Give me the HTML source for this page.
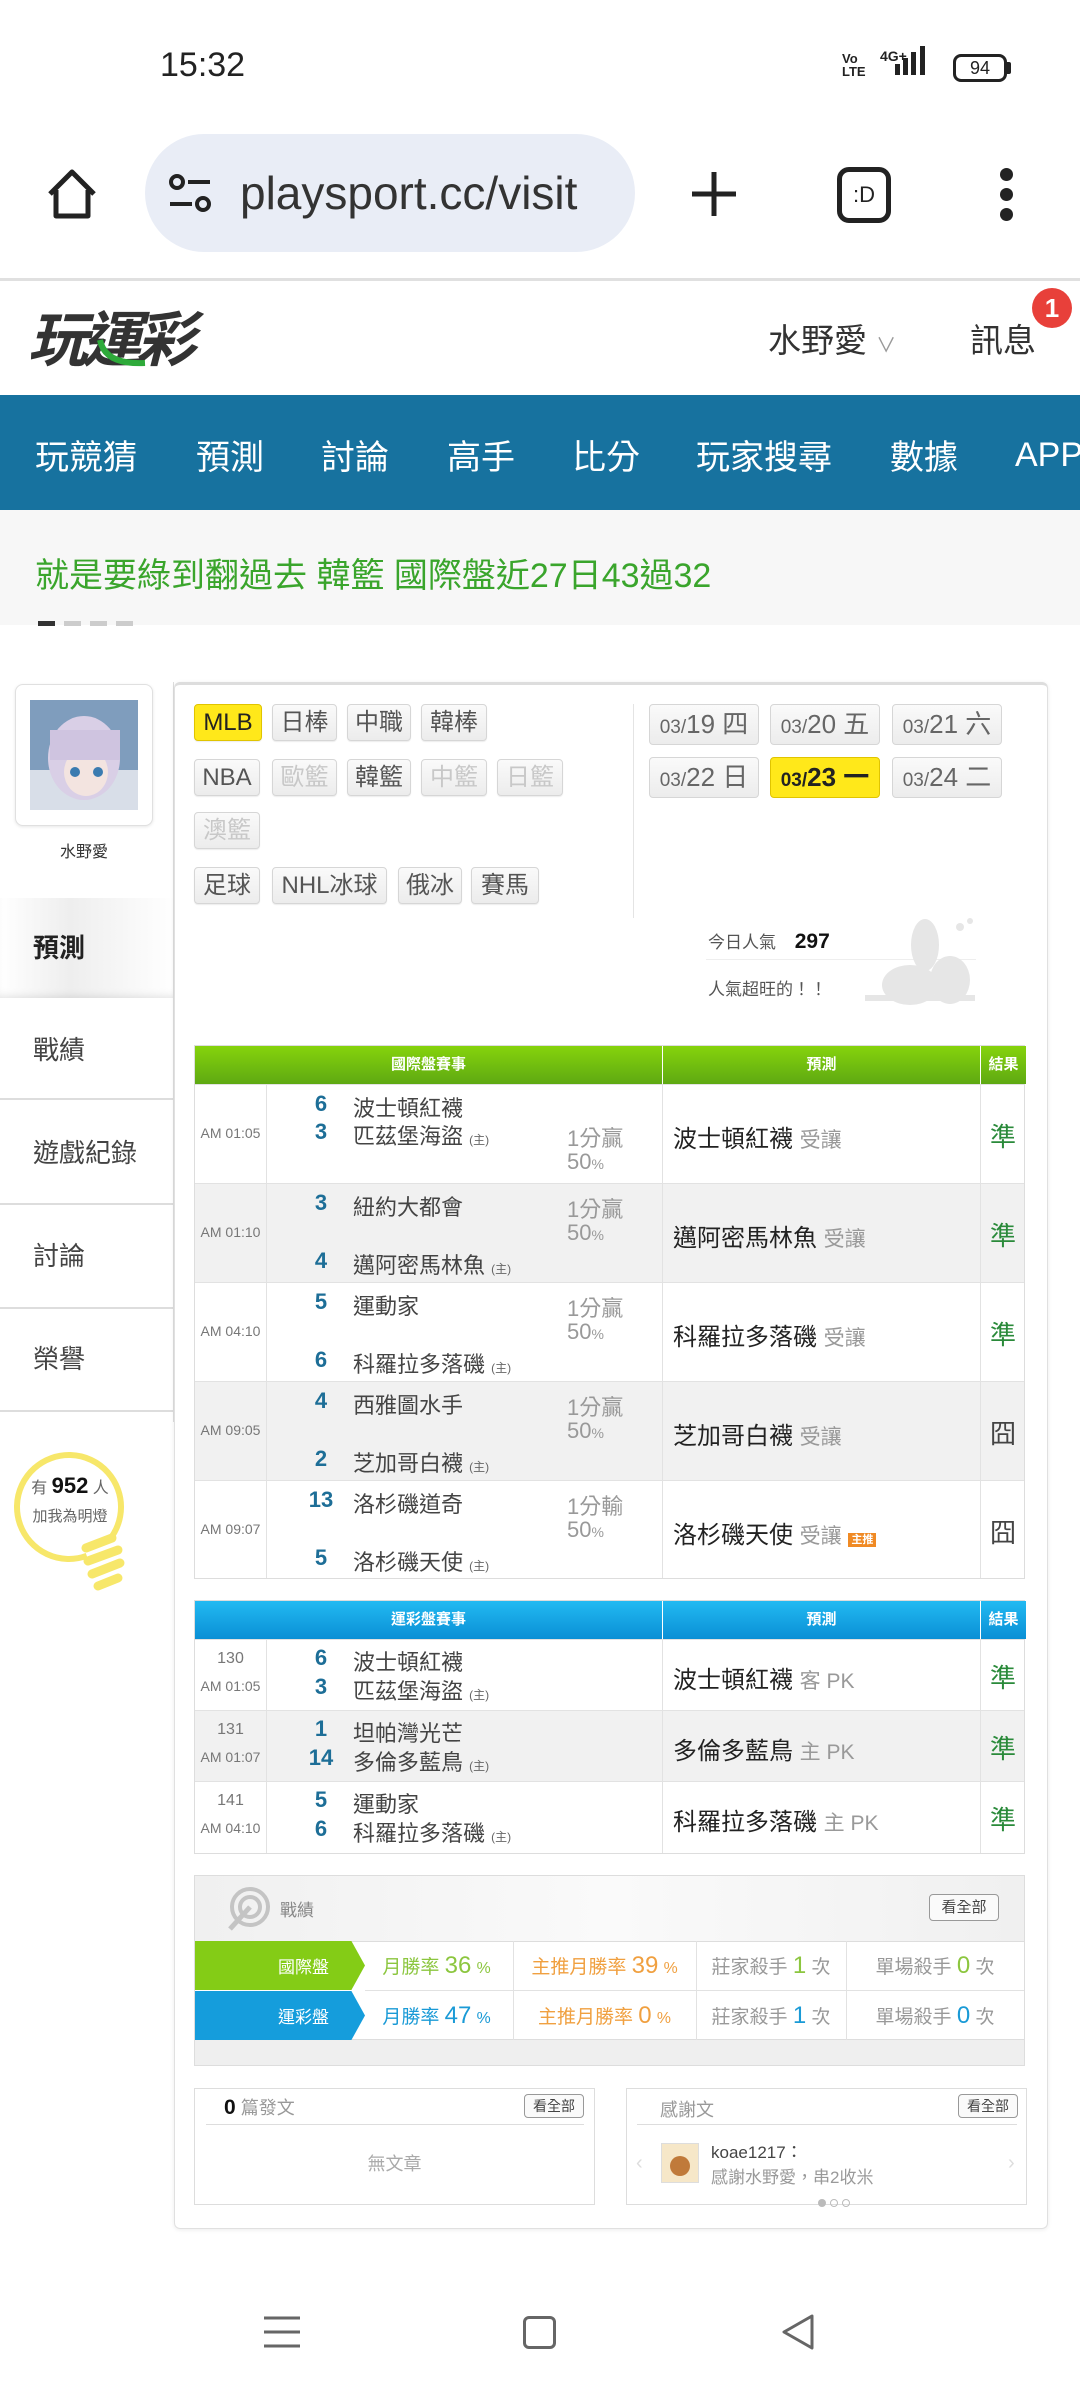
<!DOCTYPE html>
<html><head><meta charset="utf-8">
<style>
*{margin:0;padding:0;box-sizing:border-box}
body{width:1080px;height:2400px;background:#fff;position:relative;overflow:hidden;font-family:"Liberation Sans","Noto Sans CJK TC",sans-serif;color:#333}
.a{position:absolute;white-space:nowrap}
.tag{position:absolute;height:37px;border:1px solid #d6d6d6;border-radius:4px;background:linear-gradient(#fafafa,#ececec);font-size:24px;line-height:35px;text-align:center;color:#555;box-shadow:0 1px 1px rgba(0,0,0,.08)}
.tag.f{color:#c8c8c8}
.tag.y{background:#ffe81a;border-color:#e0c400;color:#222}
.dt{position:absolute;width:110px;height:41px;border:1px solid #d6d6d6;border-radius:4px;background:linear-gradient(#fafafa,#ececec);text-align:center;line-height:39px;color:#666;font-size:26px}
.dt small{font-size:19px}
.dt.y{background:#ffe81a;border-color:#e0c400;color:#222;font-weight:bold}
.menu{position:absolute;left:0;width:173px;font-size:26px;color:#444;padding-left:33px}
.sep{position:absolute;left:0;width:173px;height:2px;background:#ddd}
.tbl{position:absolute;left:194px;width:831px;border:1px solid #ddd}
.hd{position:absolute;left:0;top:0;height:38px;color:#fff;font-size:15px;font-weight:bold;text-align:center;line-height:38px}
.row{position:absolute;left:0;width:829px;border-top:1px solid #e2e2e2}
.vl{position:absolute;top:0;bottom:0;width:1px;background:#e2e2e2}
.tm{position:absolute;left:0;width:71px;text-align:center;font-size:14px;color:#777}
.sc{position:absolute;width:50px;text-align:center;font-size:22px;font-weight:bold;color:#1d6e97}
.tn{position:absolute;left:158px;font-size:22px;color:#444}
.tn i{font-style:normal;font-size:12px;color:#666}
.od{position:absolute;left:372px;font-size:22px;color:#999}
.od small{font-size:14px}
.pr{position:absolute;left:478px;font-size:24px;color:#222}
.pr span{color:#999;font-size:21px}
.rs{position:absolute;left:785px;width:46px;text-align:center;font-size:26px;color:#2a8a3a}
.rs.b{color:#444}
.cell{position:absolute;text-align:center;font-size:19px;color:#999;line-height:49px}
.btn{position:absolute;height:27px;border:1px solid #999;border-radius:4px;font-size:15px;color:#444;text-align:center;line-height:25px;background:#fafafa}
</style></head><body>

<!-- status bar -->
<div class="a" style="left:160px;top:46px;font-size:34px;color:#222">15:32</div>
<div class="a" style="left:842px;top:52px;font-size:13px;font-weight:bold;line-height:13px;color:#222">Vo<br>LTE</div>
<div class="a" style="left:880px;top:48px;font-size:14px;font-weight:bold;color:#222">4G+</div>
<div class="a" style="left:895px;top:64px;width:5px;height:11px;background:#222"></div>
<div class="a" style="left:903px;top:58px;width:5px;height:17px;background:#222"></div>
<div class="a" style="left:911px;top:52px;width:5px;height:23px;background:#222"></div>
<div class="a" style="left:920px;top:46px;width:5px;height:29px;background:#222"></div>
<div class="a" style="left:953px;top:54px;width:54px;height:28px;border:3px solid #222;border-radius:8px;font-size:18px;text-align:center;line-height:22px;color:#222">94</div>
<div class="a" style="left:1007px;top:62px;width:4px;height:12px;background:#222;border-radius:0 2px 2px 0"></div>

<!-- url bar -->
<svg class="a" style="left:42px;top:164px" width="60" height="60" viewBox="0 0 60 60"><path d="M8 30 L30 8 L52 30 M14 26 V52 H46 V26" fill="none" stroke="#222" stroke-width="5" stroke-linejoin="round"/></svg>
<div class="a" style="left:145px;top:134px;width:490px;height:118px;border-radius:59px;background:#e9edf6"></div>
<svg class="a" style="left:168px;top:172px" width="46" height="44" viewBox="0 0 46 44"><circle cx="9" cy="10" r="6" fill="none" stroke="#222" stroke-width="4"/><line x1="20" y1="10" x2="42" y2="10" stroke="#222" stroke-width="4"/><line x1="2" y1="32" x2="24" y2="32" stroke="#222" stroke-width="4"/><circle cx="35" cy="32" r="6" fill="none" stroke="#222" stroke-width="4"/></svg>
<div class="a" style="left:240px;top:166px;width:370px;overflow:hidden;font-size:46px;color:#333">playsport.cc/visit</div>
<svg class="a" style="left:688px;top:168px" width="52" height="52"><path d="M26 4V48M4 26H48" stroke="#222" stroke-width="5"/></svg>
<div class="a" style="left:837px;top:167px;width:54px;height:56px;border:5px solid #222;border-radius:12px;font-size:22px;text-align:center;line-height:46px;color:#222">:D</div>
<div class="a" style="left:1000px;top:168px;width:13px;height:13px;border-radius:50%;background:#222"></div>
<div class="a" style="left:1000px;top:188px;width:13px;height:13px;border-radius:50%;background:#222"></div>
<div class="a" style="left:1000px;top:208px;width:13px;height:13px;border-radius:50%;background:#222"></div>
<div class="a" style="left:0;top:278px;width:1080px;height:3px;background:#e0e0e0"></div>

<!-- header -->
<div class="a" style="left:28px;top:292px;font-size:60px;font-weight:bold;font-style:italic;color:#333;letter-spacing:-6px">玩運彩</div>
<svg class="a" style="left:95px;top:335px" width="60" height="40"><path d="M5 5 Q10 30 50 28" fill="none" stroke="#2eaa3a" stroke-width="6"/></svg>
<div class="a" style="left:768px;top:314px;font-size:33px;color:#333">水野愛 <span style="font-size:20px;color:#999">∨</span></div>
<div class="a" style="left:970px;top:314px;font-size:33px;color:#333">訊息</div>
<div class="a" style="left:1032px;top:288px;width:40px;height:40px;border-radius:50%;background:#e8403a;color:#fff;font-size:26px;font-weight:bold;text-align:center;line-height:40px">1</div>

<!-- nav -->
<div class="a" style="left:0;top:395px;width:1080px;height:115px;background:#17729f"></div>
<div class="a" style="left:0;top:430px;width:1080px;font-size:34px;color:#fff;height:50px">
<span class="a" style="left:35px">玩競猜</span><span class="a" style="left:196px">預測</span><span class="a" style="left:321px">討論</span><span class="a" style="left:447px">高手</span><span class="a" style="left:572px">比分</span><span class="a" style="left:696px">玩家搜尋</span><span class="a" style="left:890px">數據</span><span class="a" style="left:1015px;top:6px">APP</span></div>

<!-- banner -->
<div class="a" style="left:0;top:510px;width:1080px;height:115px;background:#f7f7f7"></div>
<div class="a" style="left:35px;top:548px;font-size:34px;color:#3aa52c">就是要綠到翻過去 韓籃 國際盤近27日43過32</div>
<div class="a" style="left:38px;top:621px;width:17px;height:5px;background:#333"></div>
<div class="a" style="left:64px;top:621px;width:17px;height:5px;background:#ccc"></div>
<div class="a" style="left:90px;top:621px;width:17px;height:5px;background:#ccc"></div>
<div class="a" style="left:116px;top:621px;width:17px;height:5px;background:#ccc"></div>

<!-- sidebar -->
<div class="a" style="left:15px;top:684px;width:138px;height:142px;border:1px solid #e0e0e0;border-radius:8px;background:#fff;box-shadow:0 1px 3px rgba(0,0,0,.1)"></div>
<svg class="a" style="left:30px;top:700px" width="108" height="110"><rect width="108" height="110" fill="#7f9dbd"/><rect y="70" width="108" height="40" fill="#d8dee8"/><ellipse cx="54" cy="58" rx="36" ry="42" fill="#d9cfe6"/><ellipse cx="56" cy="72" rx="22" ry="24" fill="#f3e4e0"/><rect x="20" y="30" width="70" height="30" fill="#cfc4e0"/><circle cx="45" cy="72" r="5" fill="#3a7bb0"/><circle cx="68" cy="72" r="5" fill="#3a7bb0"/></svg>
<div class="a" style="left:0;top:838px;width:168px;text-align:center;font-size:16px;color:#333">水野愛</div>
<div class="a" style="left:0;top:898px;width:175px;height:100px;background:linear-gradient(90deg,#fff 0%,#eee 40%,#fff 100%);box-shadow:0 -6px 10px -6px rgba(0,0,0,.15) inset"></div>
<div class="menu" style="top:928px;font-weight:bold;color:#222">預測</div>
<div class="sep" style="top:1098px"></div>
<div class="menu" style="top:1030px">戰績</div>
<div class="menu" style="top:1133px">遊戲紀錄</div>
<div class="sep" style="top:1203px"></div>
<div class="menu" style="top:1236px">討論</div>
<div class="sep" style="top:1307px"></div>
<div class="menu" style="top:1339px">榮譽</div>
<div class="sep" style="top:1410px"></div>
<div class="a" style="left:173px;top:682px;width:1px;height:740px;background:#ddd"></div>
<svg class="a" style="left:0;top:1440px" width="140" height="160"><circle cx="69" cy="67" r="52" fill="none" stroke="#f7e76a" stroke-width="6" stroke-dasharray="300 27" transform="rotate(70 69 67)"/><g stroke="#f7e76a" stroke-width="9" stroke-linecap="round"><line x1="86" y1="108" x2="112" y2="98"/><line x1="88" y1="121" x2="118" y2="110"/><line x1="92" y1="134" x2="120" y2="123"/><line x1="98" y1="146" x2="118" y2="138"/></g></svg>
<div class="a" style="left:0;top:1473px;width:140px;text-align:center;font-size:16px;color:#666">有 <b style="font-size:22px;color:#111">952</b> 人</div>
<div class="a" style="left:0;top:1505px;width:140px;text-align:center;font-size:15px;color:#666">加我為明燈</div>

<!-- main panel -->
<div class="a" style="left:174px;top:682px;width:874px;height:1547px;border:1px solid #e0e0e0;border-top:3px solid #ddd;border-radius:6px;box-shadow:0 1px 4px rgba(0,0,0,.08)"></div>

<div class="tag y" style="left:194px;top:704px;width:68px">MLB</div>
<div class="tag" style="left:272px;top:704px;width:65px">日棒</div>
<div class="tag" style="left:347px;top:704px;width:64px">中職</div>
<div class="tag" style="left:421px;top:704px;width:66px">韓棒</div>
<div class="tag" style="left:194px;top:759px;width:66px">NBA</div>
<div class="tag f" style="left:272px;top:759px;width:65px">歐籃</div>
<div class="tag" style="left:347px;top:759px;width:64px">韓籃</div>
<div class="tag f" style="left:421px;top:759px;width:66px">中籃</div>
<div class="tag f" style="left:497px;top:759px;width:66px">日籃</div>
<div class="tag f" style="left:194px;top:812px;width:66px">澳籃</div>
<div class="tag" style="left:194px;top:867px;width:66px">足球</div>
<div class="tag" style="left:272px;top:867px;width:115px">NHL冰球</div>
<div class="tag" style="left:398px;top:867px;width:64px">俄冰</div>
<div class="tag" style="left:471px;top:867px;width:68px">賽馬</div>
<div class="a" style="left:633px;top:704px;width:1px;height:214px;background:#e4e4e4"></div>

<div class="dt" style="left:649px;top:704px"><small>03/</small>19 四</div>
<div class="dt" style="left:770px;top:704px"><small>03/</small>20 五</div>
<div class="dt" style="left:892px;top:704px"><small>03/</small>21 六</div>
<div class="dt" style="left:649px;top:757px"><small>03/</small>22 日</div>
<div class="dt y" style="left:770px;top:757px"><small>03/</small>23 一</div>
<div class="dt" style="left:892px;top:757px"><small>03/</small>24 二</div>

<div class="a" style="left:708px;top:928px;font-size:17px;color:#555">今日人氣 <b style="font-size:21px;color:#111;margin-left:14px">297</b></div>
<div class="a" style="left:706px;top:959px;width:270px;height:1px;background:#eee"></div>
<div class="a" style="left:708px;top:975px;font-size:17px;color:#555">人氣超旺的！！</div>
<svg class="a" style="left:855px;top:915px" width="130" height="95"><g fill="#e6e6e6"><ellipse cx="70" cy="30" rx="14" ry="26"/><ellipse cx="55" cy="70" rx="28" ry="20"/><ellipse cx="95" cy="65" rx="20" ry="24"/><rect x="10" y="80" width="110" height="6"/><circle cx="105" cy="12" r="4"/><circle cx="115" cy="6" r="3"/></g></svg>

<!-- green table -->
<div class="tbl" style="top:1045px;height:534px">
<div class="hd" style="width:467px;background:linear-gradient(#86d30c,#5ea912)">國際盤賽事</div>
<div class="hd" style="left:467px;width:318px;background:linear-gradient(#86d30c,#5ea912);border-left:1px solid #fff">預測</div>
<div class="hd" style="left:785px;width:46px;background:linear-gradient(#86d30c,#5ea912);border-left:1px solid #fff">結果</div>

<div class="row" style="top:38px;height:99px;background:#fff">
<div class="tm" style="top:40px">AM 01:05</div><div class="sc" style="left:101px;top:6px">6</div><div class="tn" style="top:6px">波士頓紅襪</div><div class="sc" style="left:101px;top:34px">3</div><div class="tn" style="top:34px">匹茲堡海盜 <i>(主)</i></div><div class="od" style="top:36px">1分贏</div><div class="od" style="top:64px">50<small>%</small></div><div class="pr" style="top:34px">波士頓紅襪 <span>受讓</span></div><div class="rs" style="top:32px">準</div></div>

<div class="row" style="top:137px;height:99px;background:#f1f1f1">
<div class="tm" style="top:40px">AM 01:10</div><div class="sc" style="left:101px;top:6px">3</div><div class="tn" style="top:6px">紐約大都會</div><div class="sc" style="left:101px;top:64px">4</div><div class="tn" style="top:64px">邁阿密馬林魚 <i>(主)</i></div><div class="od" style="top:8px">1分贏</div><div class="od" style="top:36px">50<small>%</small></div><div class="pr" style="top:34px">邁阿密馬林魚 <span>受讓</span></div><div class="rs" style="top:32px">準</div></div>

<div class="row" style="top:236px;height:99px;background:#fff">
<div class="tm" style="top:40px">AM 04:10</div><div class="sc" style="left:101px;top:6px">5</div><div class="tn" style="top:6px">運動家</div><div class="sc" style="left:101px;top:64px">6</div><div class="tn" style="top:64px">科羅拉多落磯 <i>(主)</i></div><div class="od" style="top:8px">1分贏</div><div class="od" style="top:36px">50<small>%</small></div><div class="pr" style="top:34px">科羅拉多落磯 <span>受讓</span></div><div class="rs" style="top:32px">準</div></div>

<div class="row" style="top:335px;height:99px;background:#f1f1f1">
<div class="tm" style="top:40px">AM 09:05</div><div class="sc" style="left:101px;top:6px">4</div><div class="tn" style="top:6px">西雅圖水手</div><div class="sc" style="left:101px;top:64px">2</div><div class="tn" style="top:64px">芝加哥白襪 <i>(主)</i></div><div class="od" style="top:8px">1分贏</div><div class="od" style="top:36px">50<small>%</small></div><div class="pr" style="top:34px">芝加哥白襪 <span>受讓</span></div><div class="rs b" style="top:32px">囧</div></div>

<div class="row" style="top:434px;height:97px;background:#fff">
<div class="tm" style="top:40px">AM 09:07</div><div class="sc" style="left:101px;top:6px">13</div><div class="tn" style="top:6px">洛杉磯道奇</div><div class="sc" style="left:101px;top:64px">5</div><div class="tn" style="top:64px">洛杉磯天使 <i>(主)</i></div><div class="od" style="top:8px">1分輸</div><div class="od" style="top:36px">50<small>%</small></div><div class="pr" style="top:34px">洛杉磯天使 <span>受讓</span> <b style="font-size:11px;background:#f08a24;color:#fff;padding:1px 3px">主推</b></div><div class="rs b" style="top:32px">囧</div></div>

<div class="vl" style="left:71px;top:38px"></div><div class="vl" style="left:467px;top:38px"></div><div class="vl" style="left:785px;top:38px"></div>
</div>

<!-- blue table -->
<div class="tbl" style="top:1600px;height:254px">
<div class="hd" style="width:467px;background:linear-gradient(#22baf2,#0a8fd5)">運彩盤賽事</div>
<div class="hd" style="left:467px;width:318px;background:linear-gradient(#22baf2,#0a8fd5);border-left:1px solid #fff">預測</div>
<div class="hd" style="left:785px;width:46px;background:linear-gradient(#22baf2,#0a8fd5);border-left:1px solid #fff">結果</div>

<div class="row" style="top:38px;height:71px;background:#fff">
<div class="tm" style="top:10px;font-size:16px">130</div><div class="tm" style="top:38px">AM 01:05</div><div class="sc" style="left:101px;top:5px">6</div><div class="tn" style="top:5px">波士頓紅襪</div><div class="sc" style="left:101px;top:34px">3</div><div class="tn" style="top:34px">匹茲堡海盜 <i>(主)</i></div><div class="pr" style="top:20px">波士頓紅襪 <span>客 PK</span></div><div class="rs" style="top:18px">準</div></div>
<div class="row" style="top:109px;height:71px;background:#f1f1f1">
<div class="tm" style="top:10px;font-size:16px">131</div><div class="tm" style="top:38px">AM 01:07</div><div class="sc" style="left:101px;top:5px">1</div><div class="tn" style="top:5px">坦帕灣光芒</div><div class="sc" style="left:101px;top:34px">14</div><div class="tn" style="top:34px">多倫多藍鳥 <i>(主)</i></div><div class="pr" style="top:20px">多倫多藍鳥 <span>主 PK</span></div><div class="rs" style="top:18px">準</div></div>
<div class="row" style="top:180px;height:71px;background:#fff">
<div class="tm" style="top:10px;font-size:16px">141</div><div class="tm" style="top:38px">AM 04:10</div><div class="sc" style="left:101px;top:5px">5</div><div class="tn" style="top:5px">運動家</div><div class="sc" style="left:101px;top:34px">6</div><div class="tn" style="top:34px">科羅拉多落磯 <i>(主)</i></div><div class="pr" style="top:20px">科羅拉多落磯 <span>主 PK</span></div><div class="rs" style="top:18px">準</div></div>
<div class="vl" style="left:71px;top:38px"></div><div class="vl" style="left:467px;top:38px"></div><div class="vl" style="left:785px;top:38px"></div>
</div>

<!-- stats -->
<div class="a" style="left:194px;top:1875px;width:831px;height:191px;border:1px solid #ddd;background:#efefef"></div>
<div class="a" style="left:195px;top:1876px;width:829px;height:65px;background:linear-gradient(90deg,#f0f0f0,#fafafa 50%,#f0f0f0)"></div>
<svg class="a" style="left:222px;top:1885px" width="50" height="50"><g fill="none" stroke="#c4c4c4" stroke-width="4"><circle cx="28" cy="22" r="18"/><circle cx="28" cy="22" r="10"/></g><path d="M28 22 L8 44" stroke="#c4c4c4" stroke-width="5"/></svg>
<div class="a" style="left:280px;top:1896px;font-size:17px;color:#888">戰績</div>
<div class="btn" style="left:929px;top:1894px;width:70px">看全部</div>
<div class="a" style="left:195px;top:1941px;width:829px;height:99px;background:#fff;border-top:1px solid #ddd;border-bottom:1px solid #ddd"></div>
<div class="a" style="left:195px;top:1941px;width:170px;height:49px;background:#84cc16;clip-path:polygon(0 0,92% 0,100% 50%,92% 100%,0 100%)"></div>
<div class="a" style="left:195px;top:1991px;width:170px;height:49px;background:#159ddc;clip-path:polygon(0 0,92% 0,100% 50%,92% 100%,0 100%)"></div>
<div class="a" style="left:278px;top:1953px;font-size:17px;color:#fff">國際盤</div>
<div class="a" style="left:278px;top:2003px;font-size:17px;color:#fff">運彩盤</div>
<div class="a" style="left:513px;top:1941px;width:1px;height:99px;background:#e2e2e2"></div>
<div class="a" style="left:696px;top:1941px;width:1px;height:99px;background:#e2e2e2"></div>
<div class="a" style="left:846px;top:1941px;width:1px;height:99px;background:#e2e2e2"></div>
<div class="a" style="left:365px;top:1990px;width:659px;height:1px;background:#e2e2e2"></div>
<div class="cell" style="left:360px;top:1941px;width:153px;color:#8cc63f">月勝率 <span style="font-size:24px">36</span> <small>%</small></div>
<div class="cell" style="left:513px;top:1941px;width:183px;color:#f0a040">主推月勝率 <span style="font-size:24px">39</span> <small>%</small></div>
<div class="cell" style="left:696px;top:1941px;width:150px">莊家殺手 <span style="font-size:24px;color:#8cc63f">1</span> 次</div>
<div class="cell" style="left:846px;top:1941px;width:178px">單場殺手 <span style="font-size:24px;color:#8cc63f">0</span> 次</div>
<div class="cell" style="left:360px;top:1991px;width:153px;color:#1a9ad6">月勝率 <span style="font-size:24px">47</span> <small>%</small></div>
<div class="cell" style="left:513px;top:1991px;width:183px;color:#f0a040">主推月勝率 <span style="font-size:24px">0</span> <small>%</small></div>
<div class="cell" style="left:696px;top:1991px;width:150px">莊家殺手 <span style="font-size:24px;color:#1a9ad6">1</span> 次</div>
<div class="cell" style="left:846px;top:1991px;width:178px">單場殺手 <span style="font-size:24px;color:#1a9ad6">0</span> 次</div>

<!-- bottom boxes -->
<div class="a" style="left:194px;top:2088px;width:401px;height:117px;border:1px solid #ddd"></div>
<div class="a" style="left:224px;top:2094px;font-size:18px;color:#999"><b style="font-size:21px;color:#111">0</b> 篇發文</div>
<div class="btn" style="left:524px;top:2094px;width:60px;height:24px;line-height:22px;font-size:14px">看全部</div>
<div class="a" style="left:206px;top:2124px;width:378px;height:1px;background:#ddd"></div>
<div class="a" style="left:194px;top:2150px;width:401px;text-align:center;font-size:18px;color:#aaa">無文章</div>

<div class="a" style="left:626px;top:2088px;width:401px;height:117px;border:1px solid #ddd"></div>
<div class="a" style="left:660px;top:2096px;font-size:18px;color:#999">感謝文</div>
<div class="btn" style="left:958px;top:2094px;width:60px;height:24px;line-height:22px;font-size:14px">看全部</div>
<div class="a" style="left:637px;top:2124px;width:380px;height:1px;background:#ddd"></div>
<div class="a" style="left:661px;top:2143px;width:38px;height:40px;background:#f6e7c8;border:1px solid #ddd"></div>
<div class="a" style="left:670px;top:2156px;width:20px;height:20px;border-radius:50%;background:#c07a3a"></div>
<div class="a" style="left:711px;top:2138px;font-size:17px;color:#444">koae1217：</div>
<div class="a" style="left:711px;top:2163px;font-size:17px;color:#999">感謝水野愛，串2收米</div>
<div class="a" style="left:636px;top:2152px;font-size:20px;color:#ddd">‹</div>
<div class="a" style="left:1008px;top:2152px;font-size:20px;color:#ddd">›</div>
<div class="a" style="left:818px;top:2199px;width:8px;height:8px;border-radius:50%;background:#bbb"></div>
<div class="a" style="left:830px;top:2199px;width:8px;height:8px;border-radius:50%;border:1px solid #bbb"></div>
<div class="a" style="left:842px;top:2199px;width:8px;height:8px;border-radius:50%;border:1px solid #bbb"></div>

<!-- system nav -->
<svg class="a" style="left:262px;top:2312px" width="40" height="40"><path d="M2 6H38M2 20H38M2 34H38" stroke="#666" stroke-width="3"/></svg>
<div class="a" style="left:523px;top:2316px;width:33px;height:33px;border:3px solid #666;border-radius:6px"></div>
<svg class="a" style="left:778px;top:2312px" width="40" height="40"><path d="M34 4 L6 20 L34 36 Z" fill="none" stroke="#666" stroke-width="3" stroke-linejoin="round"/></svg>
</body></html>
